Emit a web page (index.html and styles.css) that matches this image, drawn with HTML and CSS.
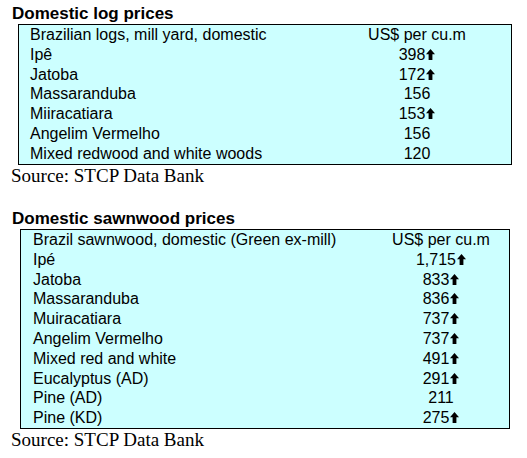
FILE: index.html
```html
<!DOCTYPE html>
<html>
<head>
<meta charset="utf-8">
<link rel="stylesheet" href="styles.css">
</head>
<body>
<svg width="0" height="0" class="defs">
  <defs>
    <symbol id="up" viewBox="0 0 9 11">
      <path d="M4.5 0 L9 5.2 L6.4 5.2 L6.4 11 L2.6 11 L2.6 5.2 L0 5.2 Z"/>
    </symbol>
  </defs>
</svg>

<h2 class="title title-first">Domestic log prices</h2>
<table class="prices prices-logs">
  <tr><td class="label">Brazilian logs, mill yard, domestic</td><td class="value">US$ per cu.m</td></tr>
  <tr><td class="label">Ipê</td><td class="value">398<svg class="arrow"><use href="#up"/></svg></td></tr>
  <tr><td class="label">Jatoba</td><td class="value">172<svg class="arrow"><use href="#up"/></svg></td></tr>
  <tr><td class="label">Massaranduba</td><td class="value">156</td></tr>
  <tr><td class="label">Miiracatiara</td><td class="value">153<svg class="arrow"><use href="#up"/></svg></td></tr>
  <tr><td class="label">Angelim Vermelho</td><td class="value">156</td></tr>
  <tr><td class="label">Mixed redwood and white woods</td><td class="value">120</td></tr>
</table>
<p class="source">Source: STCP Data Bank</p>

<h2 class="title title-second">Domestic sawnwood prices</h2>
<table class="prices prices-sawn">
  <tr><td class="label">Brazil sawnwood, domestic (Green ex-mill)</td><td class="value">US$ per cu.m</td></tr>
  <tr><td class="label">Ipé</td><td class="value">1,715<svg class="arrow"><use href="#up"/></svg></td></tr>
  <tr><td class="label">Jatoba</td><td class="value">833<svg class="arrow"><use href="#up"/></svg></td></tr>
  <tr><td class="label">Massaranduba</td><td class="value">836<svg class="arrow"><use href="#up"/></svg></td></tr>
  <tr><td class="label">Muiracatiara</td><td class="value">737<svg class="arrow"><use href="#up"/></svg></td></tr>
  <tr><td class="label">Angelim Vermelho</td><td class="value">737<svg class="arrow"><use href="#up"/></svg></td></tr>
  <tr><td class="label">Mixed red and white</td><td class="value">491<svg class="arrow"><use href="#up"/></svg></td></tr>
  <tr><td class="label">Eucalyptus (AD)</td><td class="value">291<svg class="arrow"><use href="#up"/></svg></td></tr>
  <tr><td class="label">Pine (AD)</td><td class="value">211</td></tr>
  <tr><td class="label">Pine (KD)</td><td class="value">275<svg class="arrow"><use href="#up"/></svg></td></tr>
</table>
<p class="source">Source: STCP Data Bank</p>
</body>
</html>
```
FILE: styles.css
```css
html, body {
  margin: 0;
  padding: 0;
  background: #ffffff;
}

body {
  color: #000;
}

.defs {
  position: absolute;
  width: 0;
  height: 0;
}

.title {
  margin: 0;
  padding-left: 12px;
  font-family: "Liberation Sans", Arial, sans-serif;
  font-weight: bold;
  font-size: 17px;
  line-height: 20px;
}

.title-first {
  margin-top: 4px;
}

.title-second {
  margin-top: 23.5px;
}

.prices {
  border-collapse: collapse;
  border: 1px solid #000;
  background: #ccffff;
  font-family: "Liberation Sans", Arial, sans-serif;
  font-size: 16px;
  line-height: 19.8px;
  table-layout: fixed;
}

.prices td {
  padding: 0;
  height: 19.8px;
  white-space: nowrap;
}

.prices .value {
  text-align: center;
}

.prices-logs {
  margin-left: 18px;
  width: 494px;
}

.prices-logs .label {
  padding-left: 11px;
}

.prices-logs .value {
  width: 188px;
}

.prices-sawn {
  margin-left: 20px;
  width: 490px;
}

.prices-sawn .label {
  padding-left: 12px;
}

.prices-sawn .value {
  width: 136px;
}

.arrow {
  width: 9px;
  height: 11px;
  margin-left: 1px;
  vertical-align: 0;
  fill: #000;
}

.source {
  margin: 0;
  padding: 1px 0 0 11px;
  font-family: "Liberation Serif", "Times New Roman", serif;
  font-size: 19px;
  line-height: 20px;
}
```
